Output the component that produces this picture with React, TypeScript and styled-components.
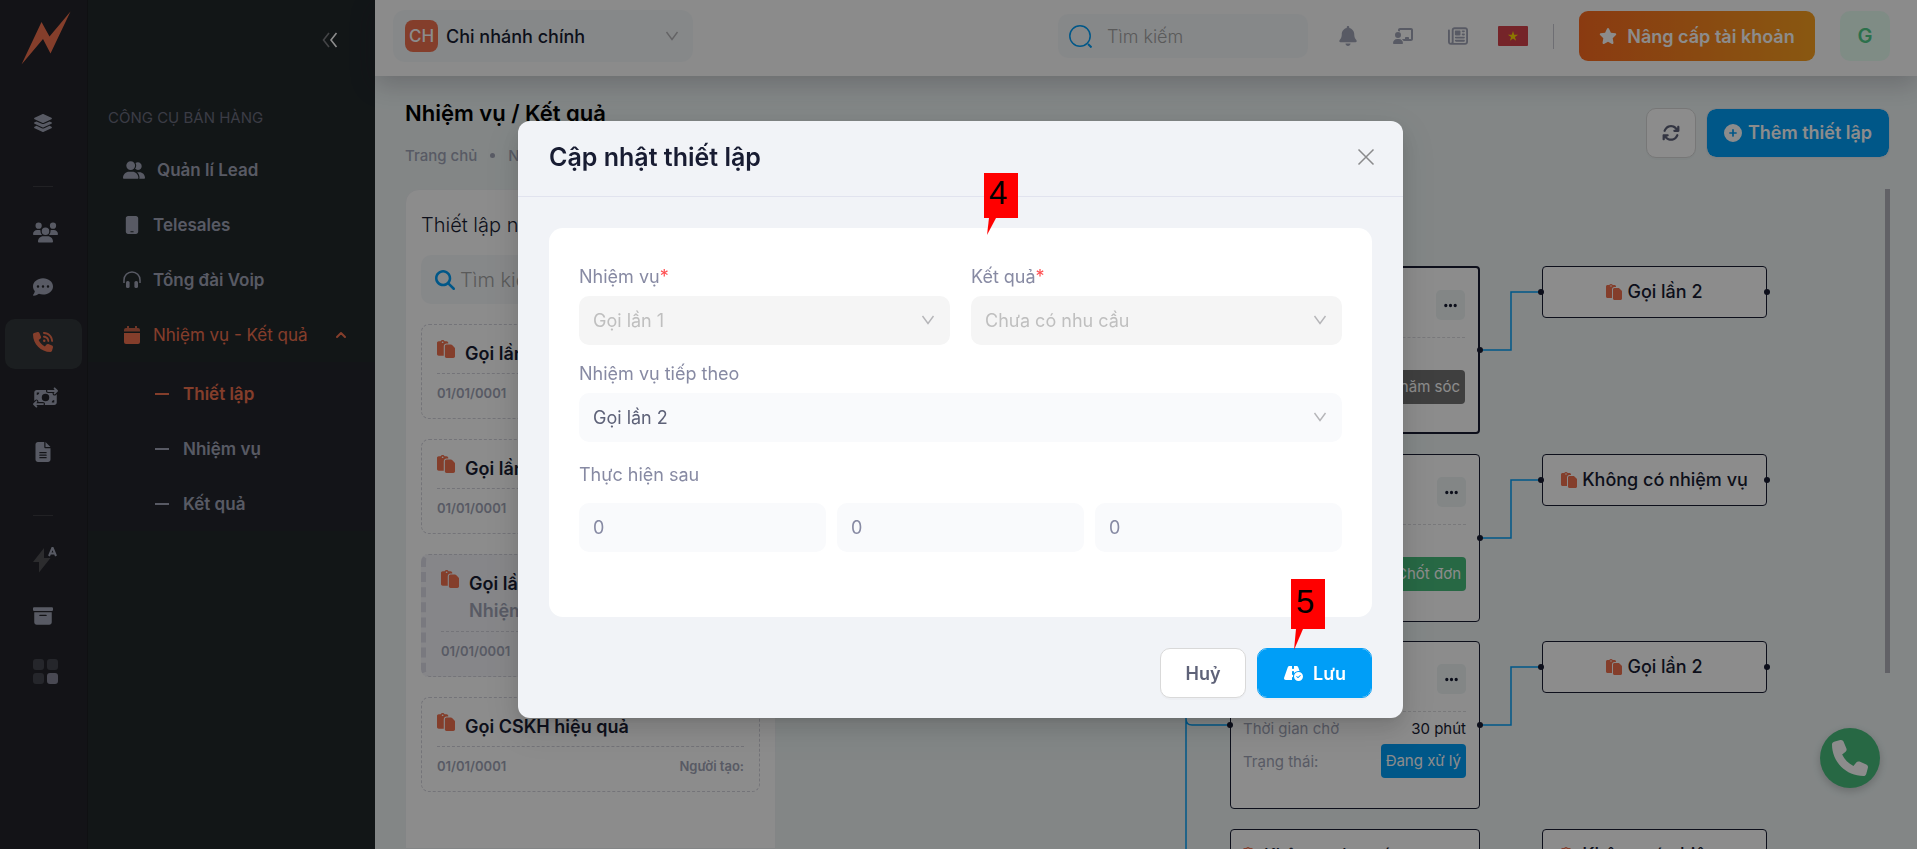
import React from 'react';
import styled, { createGlobalStyle, css } from 'styled-components';
import {
  FaLayerGroup, FaUsers, FaCommentDots, FaPhoneVolume, FaMoneyBillTransfer, FaFileLines,
  FaBoxArchive, FaUserGroup, FaMobile, FaBell, FaChalkboardUser, FaRegNewspaper, FaStar,
  FaArrowsRotate, FaCirclePlus, FaPaste, FaRoadCircleCheck, FaPhone, FaEllipsis, FaMagnifyingGlass,
} from 'react-icons/fa6';
import { ChevronUp } from 'lucide-react';

const color = {
  accent: '#f1714f',
  blue: '#009ef7',
  green: '#47be7d',
  muted: '#a1a5b7',
  dark: '#181c32',
  field: '#f9fafc',
};

const Global = createGlobalStyle`
  * { box-sizing: border-box; }
  body { margin: 0; font-family: Inter, "Noto Sans", sans-serif; font-size: 18px; color: ${color.dark}; background: #eef5f5; }
  button, input, select { font: inherit; }
  a { color: inherit; text-decoration: none; }
  h1, h2, h3, p, ul { margin: 0; padding: 0; font-weight: inherit; font-size: inherit; }
  ul { list-style: none; }
`;

const Page = styled.div`
  display: flex;
  height: 100vh;
  overflow: hidden;
`;

/* ---------- Icon rail ---------- */
const Rail = styled.nav`
  flex: 0 0 88px;
  display: flex;
  flex-direction: column;
  gap: 5px;
  padding: 11px 5px 0;
  background: #23242a;
  border-right: 1px solid #1d1e22;
`;

const Logo = styled.a`
  height: 54px;
  margin: 0 0 30px 16px;
`;

const RailLink = styled.a<{ $active?: boolean }>`
  display: flex;
  align-items: center;
  width: 77px;
  height: 50px;
  padding: 0 0 4px 28px;
  border-radius: 10px;
  color: ${(p) => (p.$active ? color.accent : color.muted)};
  background: ${(p) => (p.$active ? '#32383b' : 'transparent')};
  font-size: 20px;
`;

const RailRule = styled.hr`
  width: 20px;
  height: 1px;
  margin: 31px 0 17px 28px;
  border: 0;
  background: #3c3c43;
`;

/* ---------- Side menu ---------- */
const Side = styled.aside`
  flex: 0 0 287px;
  background: #21282b;
  font-size: 17px;
`;

const SideTop = styled.div`
  display: flex;
  justify-content: flex-end;
  height: 80px;
  padding: 0 37px;
`;

const Collapse = styled.button`
  padding: 0;
  border: 0;
  background: none;
  line-height: 0;
`;

const SideHeading = styled.h2`
  padding-left: 20px;
  margin: 24px 0 10px;
  font-size: 15px;
  line-height: 28px;
  color: #6c6e7f;
`;

const MenuLink = styled.a<{ $active?: boolean }>`
  display: flex;
  align-items: center;
  gap: 12px;
  height: 55px;
  padding: 0 26px 0 35px;
  font-weight: ${(p) => (p.$active ? 400 : 600)};
  color: ${(p) => (p.$active ? color.accent : color.muted)};
  & > svg:last-child { margin-left: auto; }
`;

const MenuIcon = styled.span`
  display: flex;
  justify-content: center;
  min-width: 18px;
  font-size: 18px;
`;

const SubMenu = styled.ul`
  padding: 4px 0 0;
  background: #24262d;
`;

const SubLink = styled.a<{ $active?: boolean }>`
  display: flex;
  align-items: center;
  gap: 14px;
  height: 55px;
  padding-left: 67px;
  font-weight: 600;
  color: ${(p) => (p.$active ? color.accent : color.muted)};
  &::before {
    content: '';
    width: 14px;
    height: 2px;
    background: currentColor;
  }
`;

/* ---------- Main column ---------- */
const Main = styled.main`
  flex: 1;
  min-width: 0;
  display: flex;
  flex-direction: column;
`;

const Header = styled.header`
  display: flex;
  align-items: center;
  flex: 0 0 76px;
  padding: 0 27px 4px 18px;
  background: #fdfdfd;
  box-shadow: 0 8px 24px rgba(40, 30, 50, 0.22);
`;

const Branch = styled.div`
  position: relative;
  display: flex;
  align-items: center;
  gap: 8px;
  width: 300px;
  height: 52px;
  padding: 0 14px 0 12px;
  border-radius: 12px;
  background: #f5f8fa;
`;

const BranchBadge = styled.span`
  width: 33px;
  border-radius: 8px;
  background: ${color.accent};
  color: #fff;
  font-size: 17px;
  font-weight: 500;
  line-height: 32px;
  text-align: center;
`;

const BranchSelect = styled.select`
  flex: 1;
  appearance: none;
  padding: 0;
  border: 0;
  background: none;
  color: ${color.dark};
  font-weight: 500;
`;

const HeaderSearch = styled.label`
  display: flex;
  align-items: center;
  gap: 15px;
  width: 250px;
  height: 44px;
  margin-left: auto;
  padding-left: 11px;
  border-radius: 10px;
  background: #f5f8fa;
`;

const PlainInput = styled.input`
  flex: 1;
  min-width: 0;
  padding: 0;
  border: 0;
  outline: 0;
  background: none;
  font-weight: 300;
  &::placeholder { color: #a4a4a4; opacity: 1; }
`;

const HeaderIcons = styled.div`
  display: flex;
  align-items: center;
  gap: 35px;
  margin: 0 30px;
`;

const IconButton = styled.button`
  display: flex;
  padding: 0;
  border: 0;
  background: none;
  color: ${color.muted};
  font-size: 20px;
`;

const HeaderRule = styled.span`
  width: 1px;
  height: 25px;
  margin: 0 25px;
  background: #c9c9d2;
`;

const Upgrade = styled.button`
  display: flex;
  align-items: center;
  justify-content: center;
  gap: 10px;
  width: 236px;
  height: 50px;
  padding: 0;
  border: 0;
  border-radius: 9px;
  color: #fff;
  font-weight: 600;
  background: linear-gradient(90deg, #fb6b20, #f9a01f);
`;

const Avatar = styled.button`
  width: 50px;
  height: 50px;
  margin-left: 25px;
  border: 0;
  border-radius: 10px;
  background: #e8fff3;
  color: #50cd89;
  font-size: 20px;
  font-weight: 600;
`;

const Toolbar = styled.div`
  display: flex;
  align-items: center;
  gap: 10px;
  flex: 0 0 113px;
  padding: 0 27px 0 30px;
`;

const Titles = styled.div`
  flex: 1;
`;

const PageTitle = styled.h1`
  font-size: 22px;
  font-weight: 600;
  line-height: 30px;
  color: #000;
`;

const Crumbs = styled.nav`
  display: flex;
  align-items: center;
  gap: 13px;
  margin-top: 16px;
  font-size: 15px;
  font-weight: 500;
  line-height: 24px;
  color: ${color.muted};
`;

const CrumbDot = styled.span`
  width: 5px;
  height: 5px;
  border-radius: 50%;
  background: ${color.muted};
`;

const Button = styled.button<{ $primary?: boolean; $width: number }>`
  display: flex;
  align-items: center;
  justify-content: center;
  gap: 6px;
  width: ${(p) => p.$width}px;
  height: 50px;
  padding: 0;
  border: 1px solid #d9d9d9;
  border-radius: 10px;
  background: #fff;
  color: #5e6278;
  font-weight: 600;
  box-shadow: 0 2px 0 rgba(0, 0, 0, 0.02);
  ${(p) => p.$primary && css`
    border-color: #e3eaf0;
    background: ${color.blue} padding-box;
    color: #fff;
  `}
`;

const Content = styled.div`
  flex: 1;
  min-height: 0;
  display: flex;
  padding: 0 27px 0 30px;
`;

/* ---------- Task list ---------- */
const ListPanel = styled.section`
  flex: 0 0 371px;
  padding: 20px 15px;
  border: 1px solid #eff2f5;
  border-radius: 14px 14px 0 0;
  background: #fff;
  overflow: hidden;
`;

const ListTitle = styled.h2`
  font-size: 20px;
  font-weight: 300;
  line-height: 30px;
`;

const ListSearch = styled.label`
  display: flex;
  align-items: center;
  gap: 5px;
  height: 49px;
  margin: 15px 0 20px;
  padding-left: 14px;
  border-radius: 10px;
  background: #f5f8fa;
  font-size: 20px;
`;

const TaskCard = styled.article<{ $active?: boolean }>`
  margin-bottom: 20px;
  padding: 15px 15px 6px;
  border: 1px dashed #d3d3dc;
  border-radius: 8px;
  ${(p) => p.$active && css`
    border-left: 5px dashed #dcdce8;
    background: #f5f5f9;
  `}
`;

const TaskHead = styled.div`
  display: flex;
  gap: 10px;
  padding-bottom: 6px;
  border-bottom: 1px dashed #d3d3dc;
  font-weight: 600;
  line-height: 28px;
  p { color: ${color.muted}; }
  svg { flex: none; font-size: 18px; color: ${color.accent}; }
`;

const TaskName = styled.h3`
  line-height: 27px;
  font-weight: 600;
`;

const TaskFoot = styled.div`
  display: flex;
  justify-content: space-between;
  font-size: 13px;
  font-weight: 600;
  line-height: 38px;
  color: ${color.muted};
`;

/* ---------- Flow canvas ---------- */
const Canvas = styled.section`
  position: relative;
  flex: 1;
  margin-left: 20px;
  overflow: hidden;
`;

const Wires = styled.svg`
  position: absolute;
  left: 0;
  top: 0;
`;

const ResultNode = styled.article<{ $top: number; $active?: boolean }>`
  position: absolute;
  left: 434px;
  top: ${(p) => p.$top}px;
  width: 250px;
  height: 168px;
  padding: 12px 13px 12px 12px;
  border: ${(p) => (p.$active ? 2 : 1)}px solid ${color.dark};
  border-radius: 4px;
  background: #fff;
  font-size: 15px;
  color: ${color.muted};
`;

const NodeHead = styled.div`
  display: flex;
  justify-content: space-between;
  align-items: flex-end;
  height: 58px;
  padding-bottom: 17px;
  margin-bottom: 3px;
  border-bottom: 1px dashed #dcdce0;
`;

const NodeTitle = styled.h3`
  display: flex;
  align-items: center;
  gap: 5px;
  align-self: flex-start;
  font-size: 18px;
  font-weight: 500;
  line-height: 26px;
  color: ${color.dark};
  svg { color: ${color.accent}; font-size: 16px; }
`;

const ResultTitle = styled(NodeTitle)`
  font-size: 17px;
`;

const MoreButton = styled.button`
  display: flex;
  align-items: center;
  justify-content: center;
  width: 29px;
  height: 30px;
  padding: 0;
  border: 0;
  border-radius: 5px;
  background: #eef5f5;
  color: ${color.dark};
`;

const NodeRow = styled.p`
  display: flex;
  justify-content: space-between;
  align-items: center;
  height: 26px;
  & + & { height: 36px; margin-top: 2px; }
`;

const Tag = styled.span<{ $color: string }>`
  padding: 0 5px;
  border-radius: 4px;
  background: ${(p) => p.$color};
  color: #fff;
  line-height: 34px;
`;

const Wait = styled.span`
  color: ${color.dark};
`;

const NextNode = styled.article<{ $top: number }>`
  position: absolute;
  left: 746px;
  top: ${(p) => p.$top}px;
  display: flex;
  align-items: center;
  justify-content: center;
  width: 225px;
  height: 52px;
  border: 1px solid ${color.dark};
  border-radius: 4px;
  background: #fff;
  h3 { align-self: center; }
`;

const ScrollThumb = styled.span`
  width: 5px;
  height: 484px;
  background: #b1b1bb;
`;

const CallButton = styled.button`
  position: fixed;
  right: 37px;
  bottom: 61px;
  display: flex;
  align-items: center;
  justify-content: center;
  width: 60px;
  height: 60px;
  border: 0;
  border-radius: 50%;
  background: ${color.green};
  color: #fff;
  font-size: 36px;
  box-shadow: 0 3px 8px rgba(0, 0, 0, 0.2);
`;

/* ---------- Dialog ---------- */
const Mask = styled.div`
  position: fixed;
  inset: 0;
  display: flex;
  justify-content: center;
  align-items: flex-start;
  padding: 121px 0 0 4px;
  background: rgba(0, 0, 0, 0.45);
`;

const Dialog = styled.form`
  position: relative;
  width: 885px;
  border-radius: 12px;
  background: #f1f3f7;
  box-shadow: 0 8px 20px rgba(0, 0, 0, 0.1), 0 4px 8px -5px rgba(0, 0, 0, 0.12), 0 11px 35px 10px rgba(0, 0, 0, 0.07);
`;

const DialogHead = styled.div`
  display: flex;
  align-items: center;
  justify-content: space-between;
  height: 76px;
  padding: 0 28px 3px 31px;
  border-bottom: 1px solid #e1e3ee;
  h2 { font-size: 25px; font-weight: 600; }
`;

const DialogCard = styled.div`
  margin: 31px 31px 0;
  padding: 33px 30px 65px;
  border-radius: 14px;
  background: #fff;
`;

const FieldGrid = styled.div<{ $columns: number; $gap: number }>`
  display: grid;
  grid-template-columns: repeat(${(p) => p.$columns}, 1fr);
  gap: ${(p) => p.$gap}px;
`;

const Label = styled.label`
  display: block;
  padding-bottom: 4px;
  line-height: 31px;
  color: #878aa3;
  sup { color: #ff4d4f; font-size: inherit; line-height: 0; vertical-align: baseline; }
`;

const SelectBox = styled.div`
  position: relative;
  margin-bottom: 13px;
  svg { position: absolute; right: 15px; top: 18px; pointer-events: none; }
`;

const Select = styled.select`
  appearance: none;
  display: block;
  width: 100%;
  height: 49px;
  padding: 0 40px 0 14px;
  border: 0;
  border-radius: 10px;
  background: ${color.field};
  color: #5e6278;
  opacity: 1;
  &:disabled { background: #f5f5f5; color: #bfbfbf; }
`;

const NumberBox = styled.input`
  width: 100%;
  height: 49px;
  padding: 0 14px;
  border: 0;
  border-radius: 10px;
  background: ${color.field};
  color: #878aa3;
`;

const LastLabel = styled(Label)`
  margin-top: 17px;
  padding-bottom: 13px;
`;

const DialogFoot = styled.div`
  display: flex;
  justify-content: flex-end;
  gap: 11px;
  padding: 31px 31px 20px;
`;

const SaveButton = styled(Button)`
  gap: 10px;
  border-color: ${color.blue};
  svg { font-size: 20px; }
`;

const Callout = styled.div<{ $left: number; $top: number; $height: number }>`
  position: absolute;
  left: ${(p) => p.$left}px;
  top: ${(p) => p.$top}px;
  width: 34px;
  height: ${(p) => p.$height}px;
  padding-left: 5px;
  background: #f00;
  color: #000;
  font-family: "Liberation Sans", sans-serif;
  font-size: 33px;
  line-height: ${(p) => p.$height - 5}px;
  svg { position: absolute; left: 2px; top: 100%; }
`;

const ChevronDown = ({ stroke = '#b5b5b8' }: { stroke?: string }) => (
  <svg width="14" height="12" viewBox="0 0 14 12" fill="none" stroke={stroke} strokeWidth="1.4" aria-hidden>
    <path d="M1.5 2 7 9.5 12.5 2" />
  </svg>
);

const HeadsetIcon = () => (
  <svg width="18" height="18" viewBox="0 0 18 18" aria-hidden>
    <path d="M1 12V9a8 8 0 0 1 16 0v3" fill="none" stroke="currentColor" strokeWidth="1.5" />
    <rect x="3" y="10" width="3.6" height="7" rx="1.6" fill="currentColor" />
    <rect x="11.4" y="10" width="3.6" height="7" rx="1.6" fill="currentColor" />
  </svg>
);

const CalendarIcon = () => (
  <svg width="18" height="18" viewBox="0 0 18 18" fill="currentColor" aria-hidden>
    <path d="M1 4a2 2 0 0 1 2-2h1V0h2v2h6V0h2v2h1a2 2 0 0 1 2 2v1.500H1z" opacity=".8" />
    <path d="M1 7h16v9a2 2 0 0 1-2 2H3a2 2 0 0 1-2-2z" />
  </svg>
);

const AutoIcon = () => (
  <svg width="25" height="28" viewBox="0 0 25 28" aria-hidden>
    <path d="M11 1 0 15h6v10.500L17.500 11H11z" fill="#505055" />
    <path d="M16 9 19.500.500 23 9M17.200 6.500h4.600" fill="none" stroke="#a1a5b7" strokeWidth="2" />
  </svg>
);

const GridIcon = () => (
  <svg width="25" height="25" viewBox="0 0 25 25" fill="#44464f" aria-hidden>
    <rect width="11" height="11" rx="3" />
    <rect x="14" width="11" height="11" rx="3" />
    <rect y="14" width="11" height="11" rx="3" />
    <rect x="14" y="14" width="11" height="11" rx="3" fill="#858597" />
  </svg>
);

const Tail = ({ height }: { height: number }) => (
  <svg width="12" height={height} viewBox={`0 0 12 ${height}`} aria-hidden>
    <path d={`M3 0H10L1 ${height}z`} fill="#f00" />
  </svg>
);

const menu = [
  { label: 'Quản lí Lead', icon: <FaUserGroup size={22} /> },
  { label: 'Telesales', icon: <FaMobile /> },
  { label: 'Tổng đài Voip', icon: <HeadsetIcon /> },
];

const tasks = [
  { name: 'Gọi lần 1' },
  { name: 'Gọi lần 2' },
  { name: 'Gọi lần 3', note: 'Nhiệm vụ mặc định', active: true },
  { name: 'Gọi CSKH hiệu quả' },
];

const flows = [
  { top: 77, result: 'Chưa có nhu cầu', wait: '', status: 'Đang chăm sóc', tag: '#737373', next: 'Gọi lần 2', active: true },
  { top: 265, result: 'Đã mua hàng', wait: '', status: 'Chốt đơn', tag: color.green, next: 'Không có nhiệm vụ' },
  { top: 452, result: 'Gọi lại sau', wait: '30 phút', status: 'Đang xử lý', tag: color.blue, next: 'Gọi lần 2' },
  { top: 640, result: 'Không nghe máy', wait: '', status: 'Đang xử lý', tag: color.blue, next: 'Không có nhiệm vụ' },
];

export default function App() {
  return (
    <>
      <Global />
      <Page>
        <Rail aria-label="Chính">
          <Logo href="#" aria-label="Logo">
            <svg width="50" height="54" viewBox="0 0 50 54" aria-hidden>
              <path d="M49.500.500 28.500 25.500 20.500 11 .500 53.500 22 28 29.500 42.500z" fill={color.accent} />
            </svg>
          </Logo>
          <RailLink href="#" aria-label="Tổng quan"><FaLayerGroup /></RailLink>
          <RailRule />
          <RailLink href="#" aria-label="Khách hàng"><FaUsers size={25} /></RailLink>
          <RailLink href="#" aria-label="Tin nhắn"><FaCommentDots /></RailLink>
          <RailLink href="#" aria-label="Bán hàng" $active><FaPhoneVolume /></RailLink>
          <RailLink href="#" aria-label="Giao dịch"><FaMoneyBillTransfer size={25} /></RailLink>
          <RailLink href="#" aria-label="Tài liệu"><FaFileLines /></RailLink>
          <RailRule />
          <RailLink href="#" aria-label="Tự động"><AutoIcon /></RailLink>
          <RailLink href="#" aria-label="Kho"><FaBoxArchive /></RailLink>
          <RailLink href="#" aria-label="Ứng dụng"><GridIcon /></RailLink>
        </Rail>

        <Side>
          <SideTop>
            <Collapse type="button" aria-label="Thu gọn">
              <svg width="16" height="16" viewBox="0 0 16 16" fill="none" strokeWidth="1.600" aria-hidden>
                <path d="M7 1 1.500 8 7 15" stroke="#7b7d80" />
                <path d="M14.500 1 9 8l5.500 7" stroke="#fff" />
              </svg>
            </Collapse>
          </SideTop>
          <SideHeading>CÔNG CỤ BÁN HÀNG</SideHeading>
          <nav>
            {menu.map((m) => (
              <MenuLink href="#" key={m.label}><MenuIcon>{m.icon}</MenuIcon><span>{m.label}</span></MenuLink>
            ))}
            <MenuLink href="#" $active>
              <MenuIcon><CalendarIcon /></MenuIcon><span>Nhiệm vụ - Kết quả</span><ChevronUp size={16} strokeWidth={3} />
            </MenuLink>
            <SubMenu>
              <li><SubLink href="#" $active>Thiết lập</SubLink></li>
              <li><SubLink href="#">Nhiệm vụ</SubLink></li>
              <li><SubLink href="#">Kết quả</SubLink></li>
            </SubMenu>
          </nav>
        </Side>

        <Main>
          <Header>
            <Branch>
              <BranchBadge>CH</BranchBadge>
              <BranchSelect aria-label="Chi nhánh"><option>Chi nhánh chính</option></BranchSelect>
              <ChevronDown />
            </Branch>
            <HeaderSearch>
              <svg width="23" height="23" viewBox="0 0 23 23" fill="none" stroke={color.blue} strokeWidth="1.500" aria-hidden>
                <circle cx="11" cy="11" r="10.200" />
                <path d="m19 19 3.500 3.500" strokeWidth="2" />
              </svg>
              <PlainInput placeholder="Tìm kiếm" aria-label="Tìm kiếm" />
            </HeaderSearch>
            <HeaderIcons>
              <IconButton type="button" aria-label="Thông báo"><FaBell /></IconButton>
              <IconButton type="button" aria-label="Hướng dẫn"><FaChalkboardUser /></IconButton>
              <IconButton type="button" aria-label="Tin tức"><FaRegNewspaper /></IconButton>
            </HeaderIcons>
            <IconButton type="button" aria-label="Tiếng Việt">
              <svg width="30" height="20" viewBox="0 0 30 20" aria-hidden>
                <rect width="30" height="20" rx="1" fill="#d6424b" />
                <path d="m15 5 1.200 3.700h3.900l-3.200 2.300 1.200 3.700L15 12.400l-3.100 2.300 1.200-3.700-3.200-2.300h3.900z" fill="#ffda00" />
              </svg>
            </IconButton>
            <HeaderRule />
            <Upgrade type="button"><FaStar />Nâng cấp tài khoản</Upgrade>
            <Avatar type="button">G</Avatar>
          </Header>

          <Toolbar>
            <Titles>
              <PageTitle>Nhiệm vụ / Kết quả</PageTitle>
              <Crumbs><a href="#">Trang chủ</a><CrumbDot /><span>Nhiệm vụ</span></Crumbs>
            </Titles>
            <Button type="button" $width={50} aria-label="Tải lại"><FaArrowsRotate /></Button>
            <Button type="button" $width={184} $primary><FaCirclePlus />Thêm thiết lập</Button>
          </Toolbar>

          <Content>
            <ListPanel>
              <ListTitle>Thiết lập nhiệm vụ</ListTitle>
              <ListSearch>
                <FaMagnifyingGlass color={color.blue} />
                <PlainInput placeholder="Tìm kiếm" aria-label="Tìm nhiệm vụ" />
              </ListSearch>
              {tasks.map((t) => (
                <TaskCard key={t.name} $active={t.active}>
                  <TaskHead>
                    <FaPaste />
                    <div>
                      <TaskName>{t.name}</TaskName>
                      {t.note && <p>{t.note}</p>}
                    </div>
                  </TaskHead>
                  <TaskFoot><span>01/01/0001</span><span>Người tạo:</span></TaskFoot>
                </TaskCard>
              ))}
            </ListPanel>

            <Canvas>
              <Wires width="1000" height="660" aria-hidden>
                <g fill="none" stroke={color.blue} strokeWidth="1.500">
                  <path d="M390 100V660M390 530q0 6 6 6h38" />
                  {flows.map((f) => (
                    <path key={f.top} d={`M684 ${f.top + 84}h31v-58h31`} />
                  ))}
                </g>
              </Wires>
              {flows.map((f) => (
                <React.Fragment key={f.top}>
                  <ResultNode $top={f.top} $active={f.active}>
                    <NodeHead>
                      <ResultTitle><FaPaste />{f.result}</ResultTitle>
                      <MoreButton type="button" aria-label="Tuỳ chọn"><FaEllipsis size={15} /></MoreButton>
                    </NodeHead>
                    <NodeRow>Thời gian chờ<Wait>{f.wait}</Wait></NodeRow>
                    <NodeRow>Trạng thái:<Tag $color={f.tag}>{f.status}</Tag></NodeRow>
                  </ResultNode>
                  <NextNode $top={f.top}><NodeTitle><FaPaste />{f.next}</NodeTitle></NextNode>
                </React.Fragment>
              ))}
              <Wires width="1000" height="660" fill={color.dark} aria-hidden>
                {flows.map((f) => (
                  <g key={f.top}>
                    <circle cx="434" cy={f.top + 84} r="3" />
                    <circle cx="684" cy={f.top + 84} r="3" />
                    <circle cx="745" cy={f.top + 26} r="3" />
                    <circle cx="971" cy={f.top + 26} r="3" />
                  </g>
                ))}
              </Wires>
            </Canvas>
            <ScrollThumb />
          </Content>
        </Main>
      </Page>

      <CallButton type="button" aria-label="Gọi"><FaPhone /></CallButton>

      <Mask>
        <Dialog role="dialog" aria-labelledby="dialog-title">
          <DialogHead>
            <h2 id="dialog-title">Cập nhật thiết lập</h2>
            <IconButton type="button" aria-label="Đóng">
              <svg width="18" height="18" viewBox="0 0 18 18" stroke="#8a8a8c" strokeWidth="1.500" aria-hidden>
                <path d="M1.500 1.500l15 15M16.500 1.500l-15 15" />
              </svg>
            </IconButton>
          </DialogHead>

          <DialogCard>
            <FieldGrid $columns={2} $gap={21}>
              <div>
                <Label htmlFor="task">Nhiệm vụ<sup>*</sup></Label>
                <SelectBox><Select id="task" disabled><option>Gọi lần 1</option></Select><ChevronDown /></SelectBox>
              </div>
              <div>
                <Label htmlFor="result">Kết quả<sup>*</sup></Label>
                <SelectBox><Select id="result" disabled><option>Chưa có nhu cầu</option></Select><ChevronDown /></SelectBox>
              </div>
            </FieldGrid>
            <Label htmlFor="next">Nhiệm vụ tiếp theo</Label>
            <SelectBox><Select id="next"><option>Gọi lần 2</option></Select><ChevronDown /></SelectBox>
            <LastLabel htmlFor="days">Thực hiện sau</LastLabel>
            <FieldGrid $columns={3} $gap={11}>
              <NumberBox id="days" aria-label="Ngày" defaultValue="0" />
              <NumberBox aria-label="Giờ" defaultValue="0" />
              <NumberBox aria-label="Phút" defaultValue="0" />
            </FieldGrid>
          </DialogCard>

          <DialogFoot>
            <Button type="button" $width={86}>Huỷ</Button>
            <SaveButton type="button" $width={115} $primary><FaRoadCircleCheck />Lưu</SaveButton>
          </DialogFoot>

          <Callout $left={466} $top={52} $height={45}>4<Tail height={17} /></Callout>
          <Callout $left={773} $top={458} $height={50}>5<Tail height={21} /></Callout>
        </Dialog>
      </Mask>
    </>
  );
}
